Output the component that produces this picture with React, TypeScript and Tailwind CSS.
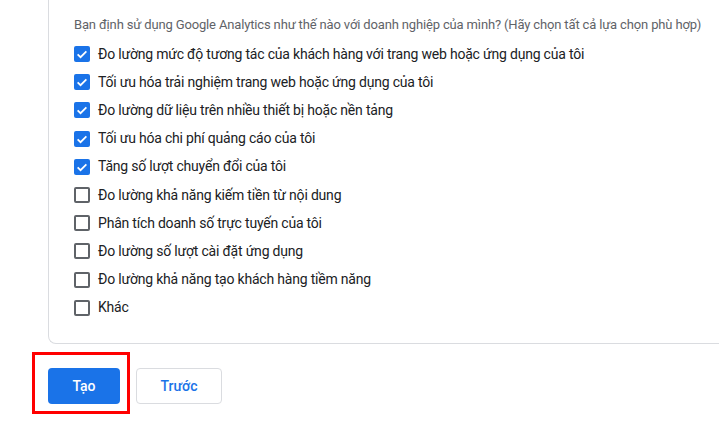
import React, { useState } from "react";

const options = [
  { label: "Đo lường mức độ tương tác của khách hàng với trang web hoặc ứng dụng của tôi", checked: true },
  { label: "Tối ưu hóa trải nghiệm trang web hoặc ứng dụng của tôi", checked: true },
  { label: "Đo lường dữ liệu trên nhiều thiết bị hoặc nền tảng", checked: true },
  { label: "Tối ưu hóa chi phí quảng cáo của tôi", checked: true },
  { label: "Tăng số lượt chuyển đổi của tôi", checked: true },
  { label: "Đo lường khả năng kiếm tiền từ nội dung", checked: false },
  { label: "Phân tích doanh số trực tuyến của tôi", checked: false },
  { label: "Đo lường số lượt cài đặt ứng dụng", checked: false },
  { label: "Đo lường khả năng tạo khách hàng tiềm năng", checked: false },
  { label: "Khác", checked: false },
];

function Checkbox({ checked, onClick }: { checked: boolean; onClick: () => void }) {
  if (checked) {
    return (
      <button onClick={onClick} className="w-4 h-4 rounded-[2px] bg-[#1a73e8] flex items-center justify-center shrink-0">
        <svg viewBox="0 0 24 24" className="w-[14px] h-[14px]" fill="none" stroke="white" strokeWidth={3}>
          <path d="M4.5 12.5l5 5L19.5 7.5" />
        </svg>
      </button>
    );
  }
  return <button onClick={onClick} className="w-4 h-4 rounded-[2px] border-2 border-[#5f6368] shrink-0" />;
}

export default function App() {
  const [items, setItems] = useState(options);

  const toggle = (i: number) => {
    setItems(items.map((it, idx) => (idx === i ? { ...it, checked: !it.checked } : it)));
  };

  return (
    <div className="w-[719px] h-[421px] bg-white overflow-hidden font-['Roboto',sans-serif]">
      <div className="ml-12 w-[700px] h-[344px] border-l border-b border-[#dadce0] rounded-bl-lg pl-[25px] pt-[17px]">
        <p className="text-[13px] text-[#5f6368] leading-4 tracking-[-0.15px]">
          Bạn định sử dụng Google Analytics như thế nào với doanh nghiệp của mình? (Hãy chọn tất cả lựa chọn phù hợp)
        </p>
        <div className="mt-[7px] flex flex-col">
          {items.map((it, i) => (
            <label key={i} className="flex items-center gap-[8px] h-[28.2px]">
              <Checkbox checked={it.checked} onClick={() => toggle(i)} />
              <span className="text-[14px] tracking-[-0.2px] text-[#202124]">{it.label}</span>
            </label>
          ))}
        </div>
      </div>

      <div className="ml-12 mt-6 flex gap-4 relative">
        <div className="absolute -left-4 -top-4 w-[98px] h-[62px] border-[3px] border-[#ff0000]" />
        <button className="w-[72px] h-9 rounded bg-[#1a73e8] text-white text-sm font-medium">Tạo</button>
        <button className="w-[86px] h-9 rounded border border-[#dadce0] text-[#1a73e8] text-sm font-medium bg-white">
          Trước
        </button>
      </div>
    </div>
  );
}
